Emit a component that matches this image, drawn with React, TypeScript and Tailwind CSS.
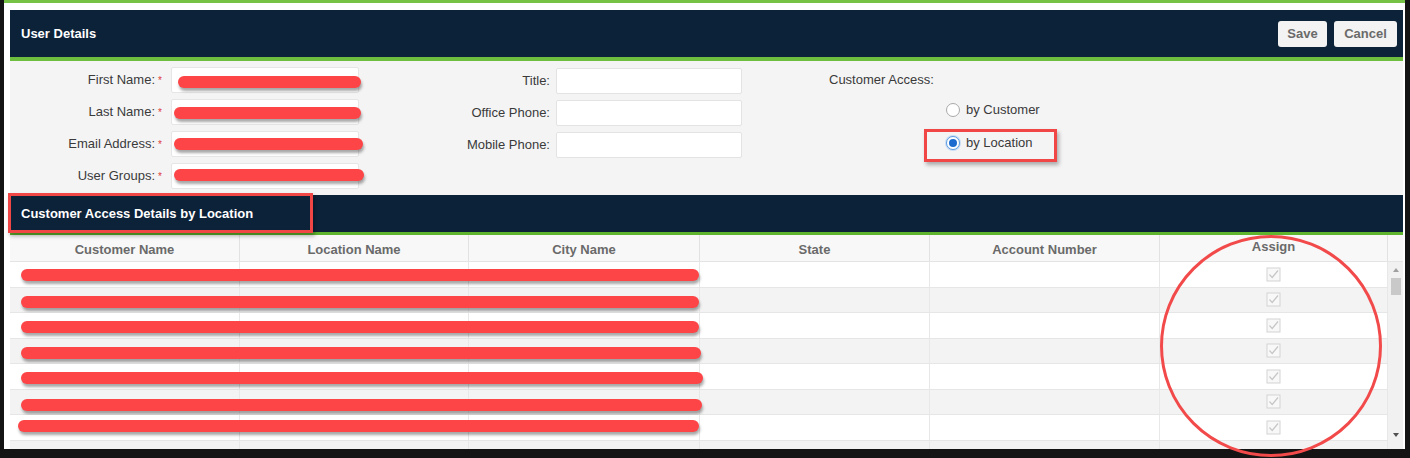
import React from "react";

const leftFields = ["First Name:", "Last Name:", "Email Address:", "User Groups:"];
const midFields = ["Title:", "Office Phone:", "Mobile Phone:"];
const columns = ["Customer Name", "Location Name", "City Name", "State", "Account Number"];

// redaction strokes on the table rows (offsets taken from the screenshot)
const rowBars = [
  "top-[7px] left-[11px] w-[678px]",
  "top-[8px] left-[11px] w-[678px]",
  "top-[8px] left-[11px] w-[678px]",
  "top-[8px] left-[11px] w-[680px]",
  "top-[8px] left-[11px] w-[682px]",
  "top-[9px] left-[11px] w-[681px]",
  "top-[5px] left-[8px] w-[681px]",
];

const formBars = [
  "top-[8px] left-[6px] w-[183px]",
  "top-[7px] left-[2px] w-[187px]",
  "top-[6px] left-[2px] w-[189px]",
  "top-[5px] left-[2px] w-[190px]",
];

const CheckIcon = () => (
  <svg width="15" height="15" viewBox="0 0 15 15">
    <rect x="1" y="1" width="13" height="13" fill="#f8f8f8" stroke="#d3d3d3" strokeWidth="1" />
    <path d="M3.5 7.5 L6.2 10.5 L12 3.5" fill="none" stroke="#c6c6c6" strokeWidth="1.2" />
  </svg>
);

const Radio = ({ checked }: { checked?: boolean }) => (
  <span
    className={
      "inline-flex items-center justify-center w-[14px] h-[14px] rounded-full border bg-white " +
      (checked ? "border-[#5b9be0] shadow-[0_0_0_1px_#c7dcf5]" : "border-[#a9a9a9]")
    }>
    {checked && <span className="w-[8px] h-[8px] rounded-full bg-[#1c6cd0]" />}
  </span>
);

export default function App() {
  return (
    <div className="relative w-[1410px] h-[458px] bg-[#141414] overflow-hidden font-['Liberation_Sans',Arial,sans-serif] text-[13px]">
      <div className="ml-[4px] w-[1401px] h-[449px] bg-white flex flex-col overflow-hidden">
        <div className="h-[3px] bg-[#76c244]" />
        <div className="h-[7px]" />
        <div className="ml-[6px] mr-[2px] flex flex-col">
          {/* user details header */}
          <div className="h-[51px] bg-[#0c2239] border-b-[4px] border-[#6dbd3e] flex items-center justify-between pl-[11px] pr-[6px]">
            <span className="text-white font-bold">User Details</span>
            <div className="flex gap-[7px]">
              <button className="w-[49px] h-[26px] rounded-[3px] bg-[#f3f3f3] text-[#6a6a6a] font-bold">Save</button>
              <button className="w-[63px] h-[26px] rounded-[3px] bg-[#f3f3f3] text-[#6a6a6a] font-bold">Cancel</button>
            </div>
          </div>

          {/* form */}
          <div className="h-[134px] bg-[#f4f4f5] flex pt-[6px]">
            <div className="flex flex-col gap-[6px]">
              {leftFields.map((label, i) => (
                <div key={label} className="flex items-center h-[26px]">
                  <span className="w-[145px] text-right text-[#3a3a3a]">{label}</span>
                  <span className="w-[10px] text-center text-[#e03c3c] text-[10px]">*</span>
                  <div className="relative ml-[6px] w-[188px] h-[26px] bg-white border border-[#e6e6e6] rounded-[2px]">
                    <div className={"absolute h-[12px] rounded-full bg-[#fd4446] shadow-[1px_3px_3px_rgba(0,0,0,0.35)] " + formBars[i]} />
                  </div>
                </div>
              ))}
            </div>
            <div className="flex flex-col gap-[6px] pt-[1px]">
              {midFields.map((label) => (
                <div key={label} className="flex items-center h-[26px]">
                  <span className="w-[191px] text-right text-[#3a3a3a]">{label}</span>
                  <div className="ml-[6px] w-[186px] h-[26px] bg-white border border-[#e3e3e3] rounded-[2px]" />
                </div>
              ))}
            </div>
            <div className="flex flex-col">
              <div className="h-[26px] flex items-center ml-[87px] text-[#3a3a3a]">Customer Access:</div>
              <div className="mt-[4px] h-[26px] flex items-center gap-[6px] ml-[204px] text-[#3a3a3a]">
                <Radio />
                <span>by Customer</span>
              </div>
              <div className="mt-[6px] ml-[182px] w-[133px] h-[33px] border-[3px] border-[#f04646] shadow-[2px_3px_4px_rgba(0,0,0,0.3)] flex items-center pl-[19px] pb-[6px] gap-[6px] text-[#3a3a3a]">
                <Radio checked />
                <span>by Location</span>
              </div>
            </div>
          </div>

          {/* location header */}
          <div className="relative h-[40px] bg-[#0c2239] border-b-[3px] border-[#5fb52e] flex items-center pl-[11px]">
            <span className="text-white font-bold">Customer Access Details by Location</span>
            <div className="absolute -left-[2px] -top-[2px] w-[305px] h-[40px] border-[3px] border-[#f04646] shadow-[2px_3px_4px_rgba(0,0,0,0.3)]" />
          </div>

          {/* table header */}
          <div className="flex h-[27px] bg-[#f8f8f8] border-b border-[#e4e4e4]">
            <div className="grid grid-cols-[230px_229px_231px_230px_230px_228px] w-[1378px]">
              {columns.map((c) => (
                <div key={c} className="flex items-center justify-center pt-[3px] border-r border-[#e2e2e2] text-[#6a6a6a] font-bold">
                  {c}
                </div>
              ))}
              <div className="flex items-start justify-center pt-[2px] border-r border-[#e2e2e2] text-[#6a6a6a] font-bold">Assign</div>
            </div>
            <div className="w-[15px]" />
          </div>

          {/* table body */}
          <div className="flex h-[187px] overflow-hidden">
            <div className="w-[1378px] flex flex-col">
              {[0, 1, 2, 3, 4, 5, 6, 7].map((r) => (
                <div
                  key={r}
                  className={
                    "relative shrink-0 h-[25.5px] border-b border-[#e6e6e6] grid grid-cols-[230px_229px_231px_230px_230px_228px] " +
                    (r % 2 === 1 ? "bg-[#f3f3f3]" : "bg-white")
                  }>
                  {[0, 1, 2, 3, 4].map((c) => (
                    <div key={c} className="border-r border-[#e8e8e8]" />
                  ))}
                  <div className="flex items-center justify-center border-r border-[#e8e8e8]">
                    {r < 7 && <CheckIcon />}
                  </div>
                  {r < 7 && (
                    <div className={"absolute h-[12px] rounded-full bg-[#fd4446] shadow-[1px_3px_3px_rgba(0,0,0,0.35)] " + rowBars[r]} />
                  )}
                </div>
              ))}
            </div>
            {/* scrollbar */}
            <div className="w-[15px] bg-[#f1f1f1] flex flex-col items-center">
              <div className="h-[16px] flex items-center justify-center">
                <div className="w-0 h-0 border-l-[3px] border-r-[3px] border-b-[4px] border-l-transparent border-r-transparent border-b-[#a0a0a0]" />
              </div>
              <div className="w-[10px] h-[17px] bg-[#c9c9c9]" />
              <div className="flex-1" />
              <div className="h-[20px] flex items-start justify-center pt-[4px]">
                <div className="w-0 h-0 border-l-[3px] border-r-[3px] border-t-[4px] border-l-transparent border-r-transparent border-t-[#505050]" />
              </div>
            </div>
          </div>
        </div>
      </div>

      {/* annotation circle */}
      <div className="absolute left-[1160px] top-[235px] w-[222px] h-[222px] rounded-full border-[3px] border-[#f24a4a]" />
    </div>
  );
}
